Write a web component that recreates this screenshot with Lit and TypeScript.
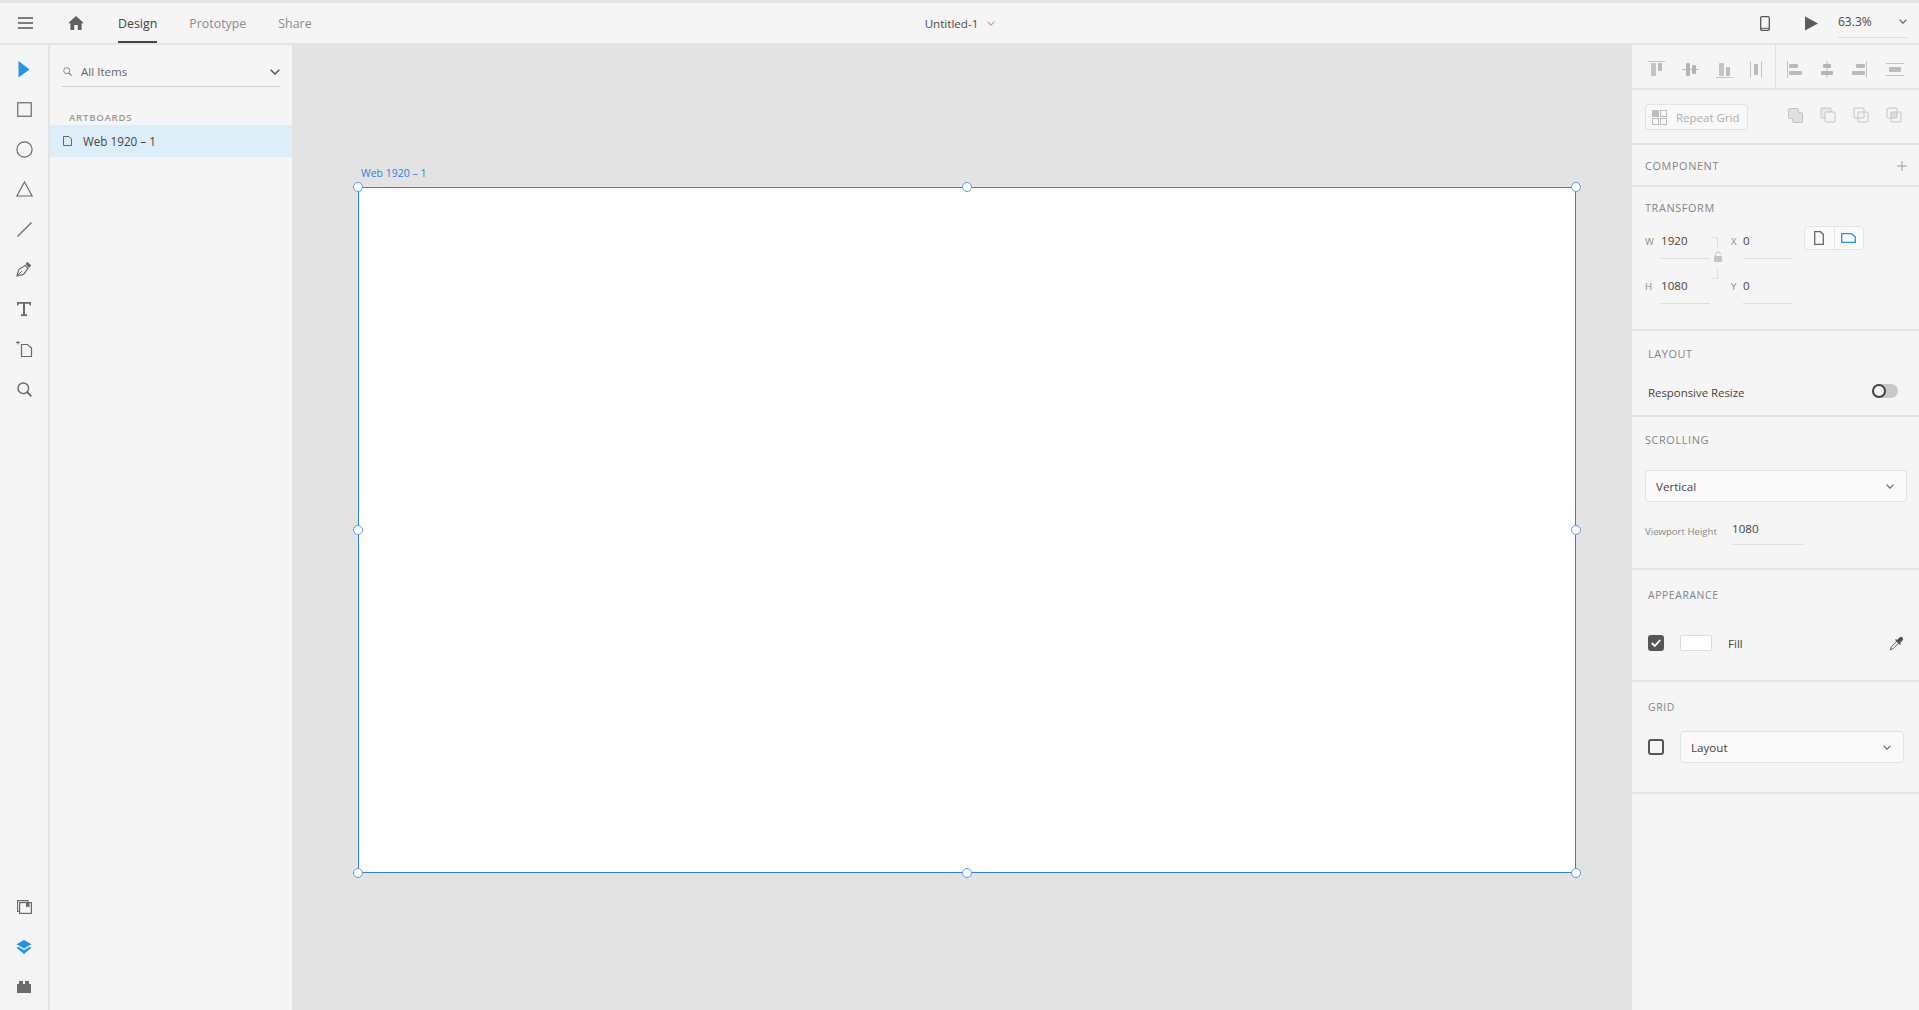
import { LitElement, html, css, svg } from "lit";
import { customElement } from "lit/decorators.js";

const ic = (w: number, h: number, body: unknown, cls = "") =>
  html`<svg class="ico ${cls}" width=${w} height=${h} viewBox="0 0 ${w} ${h}">${body}</svg>`;

const chevron = (w = 8, h = 5, sw = 1.2) =>
  ic(w, h, svg`<path d="M.6 .6 L${w / 2} ${h - .8} L${w - .6} .6" fill="none" stroke="currentColor" stroke-width=${sw}/>`);

const alignIcons = [
  [17, 17, svg`<path d="M0 .5H17" stroke="#c4c4c4"/><rect x="3" y="2" width="5" height="13" rx="1" fill="#c4c4c4"/><rect x="10" y="2" width="4" height="8" rx="1" fill="#bbb"/>`],
  [17, 17, svg`<path d="M0 8.5H17" stroke="#bdbdbd"/><rect x="4" y="2" width="4" height="13" rx="1" fill="#b4b4b4"/><rect x="10" y="4" width="4" height="9" rx="1" fill="#b4b4b4"/>`],
  [17, 17, svg`<path d="M0 16.5H17" stroke="#c4c4c4"/><rect x="3" y="2" width="5" height="13" rx="1" fill="#c4c4c4"/><rect x="10" y="6" width="4" height="9" rx="1" fill="#bbb"/>`],
  [12, 17, svg`<path d="M.5 0V17M11.5 0V17" stroke="#c4c4c4"/><rect x="4" y="3" width="4" height="11" rx="1" fill="#bbb"/>`],
  [15, 17, svg`<path d="M.5 0V17" stroke="#c4c4c4"/><rect x="2" y="3" width="9" height="4" rx="1" fill="#bbb"/><rect x="2" y="10" width="13" height="4" rx="1" fill="#bbb"/>`],
  [12, 17, svg`<path d="M6 0V17" stroke="#bdbdbd"/><rect x="2" y="3" width="8" height="4" rx="1" fill="#b4b4b4"/><rect x="0" y="10" width="12" height="4" rx="1" fill="#b4b4b4"/>`],
  [15, 17, svg`<path d="M14.5 0V17" stroke="#c4c4c4"/><rect x="4" y="3" width="9" height="4" rx="1" fill="#bbb"/><rect x="0" y="10" width="13" height="4" rx="1" fill="#bbb"/>`],
  [18, 13, svg`<path d="M0 .5H18M0 12.5H18" stroke="#c4c4c4"/><rect x="3" y="4" width="12" height="5" rx="1" fill="#bbb"/>`],
] as const;

const boolIcons = [
  svg`<path d="M1.5 2.5a1 1 0 0 1 1-1h8a1 1 0 0 1 1 1v3h3a1 1 0 0 1 1 1v8a1 1 0 0 1-1 1h-8a1 1 0 0 1-1-1v-3h-3a1 1 0 0 1-1-1z" fill="#e0e0e0" stroke="#c4c4c4"/>`,
  svg`<rect x="1" y="1" width="10" height="10" rx="1" fill="#e8e8e8" stroke="#c4c4c4"/><rect x="5" y="5" width="10" height="10" rx="1" fill="#f4f4f4" stroke="#c4c4c4"/>`,
  svg`<rect x="1" y="1" width="10" height="10" rx="1" fill="none" stroke="#c4c4c4"/><rect x="5" y="5" width="10" height="10" rx="1" fill="none" stroke="#c4c4c4"/>`,
  svg`<rect x="5" y="5" width="6" height="6" fill="#dcdcdc"/><rect x="1" y="1" width="10" height="10" rx="1" fill="none" stroke="#c4c4c4"/><rect x="5" y="5" width="10" height="10" rx="1" fill="none" stroke="#c4c4c4"/>`,
];

const P = "#6a6a6a";
const tools = [
  ic(12, 17, svg`<path d="M.5 0L11.5 8.5L.5 16.5Z" fill="#1f94ea"/>`),
  ic(15, 15, svg`<rect x=".75" y=".75" width="13.5" height="13.5" fill="none" stroke=${P} stroke-width="1.2"/>`),
  ic(17, 17, svg`<circle cx="8.5" cy="8.5" r="7.6" fill="none" stroke=${P} stroke-width="1.2"/>`),
  ic(17, 16, svg`<path d="M8.5 1L16.2 15H.8Z" fill="none" stroke=${P} stroke-width="1.2"/>`),
  ic(15, 15, svg`<path d="M.5 14.5L14.5 .5" stroke=${P} stroke-width="1.2"/>`),
  ic(16, 16, svg`<path d="M1 15L2.8 8.6L9 4.4L12 7.4L7.6 13.4Z" fill="none" stroke=${P} stroke-width="1.2"/><path d="M1 15L6 10" stroke=${P}/><path d="M9.5 3.2L11.2 .8L15.4 4.6L13 6.8Z" fill=${P}/>`),
  ic(14, 14, svg`<path d="M.5 3.5V.8H13.5V3.5M7 1V13M4 13.2H10" fill="none" stroke=${P} stroke-width="2"/>`),
  ic(17, 17, svg`<path d="M0 1.5H4M2 0V3.5" stroke=${P}/><path d="M5.5 3.5H11.5L15.5 7V15.5H5.5Z" fill="none" stroke=${P} stroke-width="1.2"/>`),
  ic(15, 15, svg`<circle cx="6.3" cy="6.3" r="5.3" fill="none" stroke=${P} stroke-width="1.4"/><path d="M10 10L14.4 14.4" stroke=${P} stroke-width="1.8"/>`),
];

const bottomTools = [
  ic(15, 14, svg`<path d="M2.5 11.5H.6V.6H11V2.5" fill="none" stroke=${P} stroke-width="1.1"/><rect x="2.6" y="2.6" width="11.8" height="10.8" fill="none" stroke=${P} stroke-width="1.2"/><path d="M9 2.6H12.5V7.5L10.8 6.4L9 7.5Z" fill=${P}/>`),
  ic(16, 14, svg`<path d="M8 0L15.5 4.2L8 8.4L.5 4.2Z" fill="#1f94ea"/><path d="M2.2 6.8L8 10L13.8 6.8L15.5 7.8L8 14L.5 7.8Z" fill="#1f94ea"/>`),
  ic(14, 12, svg`<path d="M0 3H2V0H6V3H8V0H12V3H14V12H0Z" fill=${P}/>`),
];

@customElement("app-root")
export class AppRoot extends LitElement {
  static styles = css`
    :host { display: block; width: 1919px; height: 1010px; overflow: hidden; background: #f5f5f5;
      font-family: "Open Sans", "Noto Sans", sans-serif; font-size: 12px; color: #4a4a4a; }
    * { box-sizing: border-box; }
    .ico { display: block; flex: none; }
    .app { display: flex; flex-direction: column; height: 100%; padding-top: 3px; background: #e4e4e4; }

    .top { height: 40px; flex: none; background: #f5f5f5; display: grid; grid-template-columns: 1fr auto 1fr; align-items: stretch; margin-bottom: 2px; }
    .top-left { display: flex; align-items: center; padding-left: 18px; }
    .burger { color: #555; }
    .home { margin-left: 35px; margin-right: 34px; color: #606060; }
    .tab { height: 40px; display: flex; align-items: center; color: #8c8c8c; font-size: 12.4px; margin-right: 32px; border-bottom: 2px solid transparent; padding-top: 2px; }
    .tab.on { color: #444; border-bottom-color: #444; }
    .top-mid { display: flex; align-items: center; gap: 9px; font-size: 11.6px; color: #4a4a4a; margin-left: 1px; }
    .top-mid .ico { color: #aaa; }
    .top-right { display: flex; align-items: center; justify-content: flex-end; padding-right: 11px; }
    .play { margin-left: 35px; }
    .zoom { width: 70px; height: 29px; margin-left: 20px; margin-top: 1px; border-bottom: 1px solid #e0e0e0; display: flex; align-items: center; justify-content: space-between; font-size: 12px; color: #4a4a4a; padding: 0 1px 4px 0; }
    .zoom .ico { color: #666; }

    .main { flex: 1; display: flex; min-height: 0; }
    .rail { width: 50px; flex: none; background: #f5f5f5; border-right: 2px solid #e4e4e4; display: flex; flex-direction: column; align-items: center; padding: 4px 0 3px; }
    .tool { height: 40px; display: flex; align-items: center; justify-content: center; flex: none; }
    .spacer { flex: 1; }

    .layers { width: 242px; flex: none; background: #f5f5f5; }
    .search { margin: 0 12px; height: 42px; border-bottom: 1px solid #cfcfcf; display: flex; align-items: center; color: #666; font-size: 11.6px; padding: 12px 0 0 1px; }
    .search span { margin-left: 9px; flex: 1; }
    .layers-title { margin: 24px 0 0 19px; font-size: 9.6px; letter-spacing: .75px; color: #999; height: 14px; line-height: 14px; font-weight: 600; }
    .row { height: 32px; background: #deeef8; display: flex; align-items: center; padding-left: 13px; color: #444; font-size: 11.7px; gap: 11px; }

    .canvas { flex: 1; background: #e3e3e3; padding: 142px 0 0 66px; min-width: 0; }
    .ab-label { color: #2f7fe0; font-size: 10.5px; height: 16px; line-height: 14px; padding-left: 3px; margin: -21px 0 5px; }
    .board { position: relative; width: 1218px; height: 686px; background: #fff; border: 1.5px solid #3081e4; }
    .h { position: absolute; width: 10px; height: 10px; border-radius: 50%; background: #fff; border: 1.5px solid #5a9bec; transform: translate(-50%, -50%); }

    .props { width: 287px; flex: none; background: #f5f5f5; display: flex; flex-direction: column; }
    .sec { flex: none; border-bottom: 2px solid #e4e4e4; }
    .align { height: 45px; display: flex; align-items: center; }
    .align-a { width: 144px; height: 100%; border-right: 1px solid #e0e0e0; display: flex; align-items: center; padding: 5px 0 0 16px; gap: 17px; }
    .align-b { display: flex; align-items: center; padding: 5px 0 0 11px; gap: 19px; }
    .repeat { height: 55px; display: flex; align-items: center; padding: 1px 0 0 13px; }
    .rg { width: 103px; height: 26px; border: 1px solid #e2e2e2; border-radius: 3px; background: #f8f8f8; display: flex; align-items: center; gap: 9px; padding-left: 6px; color: #aeaeae; font-size: 11.5px; margin-right: 39px; }
    .bools { display: flex; gap: 17px; margin-top: -4px; }
    .comp { height: 42px; display: flex; align-items: center; justify-content: space-between; padding: 2px 12px 0 13px; }
    .lbl { font-size: 10.4px; letter-spacing: .6px; color: #858585; line-height: 14px; }
    .lbl.big { font-size: 10.9px; }
    .lbl.in { padding-left: 16px; }
    .plus { color: #9a9a9a; }

    .transform { height: 144px; padding: 12px 0 0 13px; }
    .tf-wrap { display: flex; }
    .tf { display: grid; grid-template-columns: 17px 48px 21px 13px 48px; grid-auto-rows: 45px; margin-top: 16px; }
    .t-k { font-size: 9.6px; color: #8a8a8a; padding-top: 3px; }
    .t-v { font-size: 11.6px; color: #444; border-bottom: 1px solid #dedede; height: 27px; padding: 1px 0 0 0; margin-left: -1px; }
    .t-lock { grid-row: 1 / span 2; grid-column: 3; padding: 5px 0 0 1px; }
    .seg { display: flex; margin: 10px 0 0 12px; height: 24px; width: 60px; border: 1px solid #e4e4e4; border-radius: 4px; background: #fafafa; }
    .seg div { flex: 1; display: flex; align-items: center; justify-content: center; }
    .seg div + div { border-left: 1px solid #e4e4e4; }

    .layout { height: 86px; padding-top: 14px; }
    .rr { display: flex; align-items: center; justify-content: space-between; margin-top: 23px; padding: 0 21px 0 16px; font-size: 11.4px; color: #444; }
    .sw { width: 26px; height: 14px; background: #c8c8c8; border-radius: 7px; position: relative; margin-top: -3px; }
    .sw::before { content: ""; position: absolute; box-sizing: border-box; left: 0; top: 0; width: 14px; height: 14px; border-radius: 50%; background: #f5f5f5; border: 2px solid #444; }

    .scroll { height: 153px; padding: 14px 0 0 13px; }
    .select { display: flex; align-items: center; justify-content: space-between; height: 32px; border: 1px solid #e2e2e2; border-radius: 4px; background: #fafafa; padding: 0 12px 0 10px; color: #444; font-size: 11.6px; }
    .select .ico { color: #666; }
    .scroll .select { width: 262px; margin-top: 22px; }
    .vp { display: flex; margin-top: 13px; }
    .vp-k { font-size: 9.6px; color: #8a8a8a; width: 87px; padding-top: 10px; }
    .vp-v { width: 72px; height: 30px; border-bottom: 1px solid #dedede; font-size: 11.6px; color: #444; padding-top: 4px; line-height: 20px; }

    .appear { height: 112px; padding-top: 16px; }
    .fill { display: flex; align-items: center; padding: 0 15px 0 16px; margin-top: 32px; }
    .cb { width: 16px; height: 16px; border-radius: 3px; border: 2px solid #555; flex: none; display: flex; align-items: center; justify-content: center; }
    .cb.on { background: #555; }
    .swatch { width: 32px; height: 16px; background: #fff; border: 1px solid #dcdcdc; border-radius: 2px; margin: 0 16px; }
    .fill-t { flex: 1; font-size: 11.6px; color: #444; }

    .gridsec { height: 112px; padding-top: 16px; }
    .grow { display: flex; align-items: center; padding-left: 16px; margin-top: 16px; gap: 16px; }
    .grow .select { width: 224px; }
  `;

  private handles() {
    const stops = [0, 0.5, 1];
    return stops.flatMap((fy, j) =>
      stops
        .filter((_, i) => !(i === 1 && j === 1))
        .map((fx) => html`<div class="h" style="left:calc((100% + 1.5px) * ${fx} - .75px);top:calc((100% + 1.5px) * ${fy} - .75px)"></div>`)
    );
  }

  render() {
    return html`<div class="app">
      <div class="top">
        <div class="top-left">
          <span class="burger">${ic(15, 12, svg`<path d="M0 1H15M0 6H15M0 11H15" stroke="currentColor" stroke-width="1.6"/>`)}</span>
          <span class="home">${ic(16, 14, svg`<path d="M8 0L16 7.2H13.6V14H9.8V9H6.2V14H2.4V7.2H0Z" fill="currentColor"/>`)}</span>
          <div class="tab on">Design</div>
          <div class="tab">Prototype</div>
          <div class="tab">Share</div>
        </div>
        <div class="top-mid"><span>Untitled-1</span>${chevron(8, 5, 1.1)}</div>
        <div class="top-right">
          ${ic(10, 15, svg`<rect x=".7" y=".7" width="8.6" height="13.6" rx="1.2" fill="none" stroke="#555" stroke-width="1.3"/><path d="M1 12.3H9" stroke="#555"/>`)}
          <span class="play">${ic(13, 15, svg`<path d="M0 .5L13 7.5L0 14.5Z" fill="#5c5c5c"/>`)}</span>
          <div class="zoom"><span>63.3%</span>${chevron()}</div>
        </div>
      </div>

      <div class="main">
        <div class="rail">
          ${tools.map((t) => html`<div class="tool">${t}</div>`)}
          <div class="spacer"></div>
          ${bottomTools.map((t) => html`<div class="tool">${t}</div>`)}
        </div>

        <div class="layers">
          <div class="search">
            ${ic(9, 9, svg`<circle cx="3.7" cy="3.7" r="3" fill="none" stroke="#888" stroke-width="1"/><path d="M6 6L8.6 8.6" stroke="#888" stroke-width="1.2"/>`)}
            <span>All Items</span>
            ${ic(10, 6, svg`<path d="M.7 .7L5 5L9.3 .7" fill="none" stroke="#555" stroke-width="1.5"/>`)}
          </div>
          <div class="layers-title">ARTBOARDS</div>
          <div class="row">
            ${ic(9, 10, svg`<path d="M.5 .5H6L8.5 3V9.5H.5Z" fill="none" stroke="#666"/>`)}
            <span>Web 1920 – 1</span>
          </div>
        </div>

        <div class="canvas">
          <div class="ab-label">Web 1920 – 1</div>
          <div class="board">${this.handles()}</div>
        </div>

        <div class="props">
          <div class="sec align">
            <div class="align-a">${alignIcons.slice(0, 4).map(([w, h, b]) => ic(w, h, b))}</div>
            <div class="align-b">${alignIcons.slice(4).map(([w, h, b]) => ic(w, h, b))}</div>
          </div>
          <div class="sec repeat">
            <div class="rg">
              ${ic(15, 15, svg`<rect x="0" y="0" width="7" height="7" fill="#bdbdbd"/><rect x="8.5" y=".5" width="6" height="6" fill="none" stroke="#bdbdbd"/><rect x=".5" y="8.5" width="6" height="6" fill="none" stroke="#bdbdbd"/><rect x="8.5" y="8.5" width="6" height="6" fill="none" stroke="#bdbdbd"/>`)}
              <span>Repeat Grid</span>
            </div>
            <div class="bools">${boolIcons.map((b) => ic(16, 16, b))}</div>
          </div>
          <div class="sec comp">
            <span class="lbl big">COMPONENT</span>
            <span class="plus">${ic(10, 10, svg`<path d="M5 0V10M0 5H10" stroke="currentColor"/>`)}</span>
          </div>
          <div class="sec transform">
            <span class="lbl big">TRANSFORM</span>
            <div class="tf-wrap">
              <div class="tf">
                <span class="t-k">W</span><span class="t-v">1920</span>
                <span class="t-lock">${ic(12, 42, svg`<path d="M1 .5H6.5V11M1 41.5H6.5V31" fill="none" stroke="#e0e0e0"/><rect x="3" y="19" width="8" height="6" rx="1" fill="#c4c4c4"/><path d="M4.5 19V17.5a2.5 2.5 0 0 1 5 0" fill="none" stroke="#c4c4c4"/>`)}</span>
                <span class="t-k">X</span><span class="t-v">0</span>
                <span class="t-k">H</span><span class="t-v">1080</span>
                <span class="t-k">Y</span><span class="t-v">0</span>
              </div>
              <div class="seg">
                <div>${ic(10, 14, svg`<path d="M.7 .7H6.5L9.3 3.5V13.3H.7Z" fill="none" stroke="#666" stroke-width="1.3"/>`)}</div>
                <div>${ic(15, 10, svg`<path d="M.7 .7H10.5L14.3 4V9.3H.7Z" fill="none" stroke="#1f94ea" stroke-width="1.3"/>`)}</div>
              </div>
            </div>
          </div>
          <div class="sec layout">
            <span class="lbl big in">LAYOUT</span>
            <div class="rr"><span>Responsive Resize</span><div class="sw"></div></div>
          </div>
          <div class="sec scroll">
            <span class="lbl big">SCROLLING</span>
            <div class="select"><span>Vertical</span>${chevron()}</div>
            <div class="vp"><span class="vp-k">Viewport Height</span><span class="vp-v">1080</span></div>
          </div>
          <div class="sec appear">
            <span class="lbl in">APPEARANCE</span>
            <div class="fill">
              <div class="cb on">${ic(10, 8, svg`<path d="M.8 4L3.8 7L9.2 1" fill="none" stroke="#fff" stroke-width="1.8"/>`)}</div>
              <div class="swatch"></div>
              <span class="fill-t">Fill</span>
              ${ic(15, 15, svg`<path d="M1.5 13.5L1 14.2M1.5 13.5L2.2 11L8 5.2L9.8 7L4 12.8Z" fill="none" stroke="#666"/><path d="M8 4L10.5 1.5A2 2 0 0 1 13.5 4.5L11 7L12 8L11 9L6 4L7 3Z" fill="#555"/>`)}
            </div>
          </div>
          <div class="sec gridsec">
            <span class="lbl in">GRID</span>
            <div class="grow">
              <div class="cb"></div>
              <div class="select"><span>Layout</span>${chevron()}</div>
            </div>
          </div>
        </div>
      </div>
    </div>`;
  }
}
